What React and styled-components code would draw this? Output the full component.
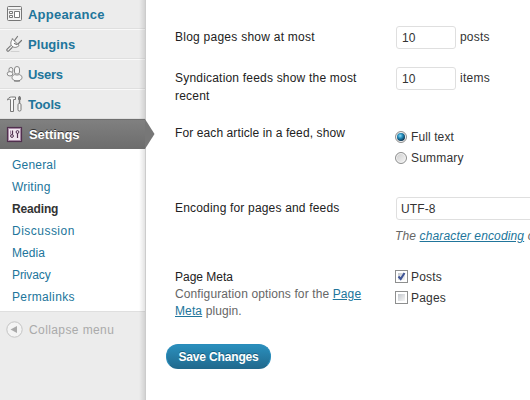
import React from 'react';
import styled, { createGlobalStyle, css } from 'styled-components';

const Global = createGlobalStyle`
  * { box-sizing: border-box; }
  html, body { margin: 0; background: #fff; overflow: hidden; }
  body { font: 12px/18px "Liberation Sans", Arial, sans-serif; color: #333; }
`;

const Page = styled.div`
  display: flex;
  width: 530px;
  height: 400px;
  overflow: hidden;
  white-space: nowrap;
`;

const Sidebar = styled.nav`
  position: relative;
  flex: none;
  width: 146px;
  height: 400px;
  background: #ececec;
  border-right: 1px solid #ccc;
  &::after {
    content: '';
    position: absolute;
    inset: 0 0 0 auto;
    width: 6px;
    background: linear-gradient(to right, rgba(0,0,0,0), rgba(0,0,0,0.11));
  }
`;

const MenuItem = styled.a`
  display: flex;
  align-items: center;
  height: ${p => p.$first ? 29 : 30}px;
  padding-left: 6px;
  gap: 5px;
  border-top: ${p => p.$first ? 0 : 1}px solid #f9f9f9;
  border-bottom: 1px solid #dfdfdf;
  color: #21759b;
  font-size: 13px;
  font-weight: bold;
  svg { flex: none; }
`;

const MenuLabel = styled.span`
  padding-top: 2px;
  letter-spacing: ${p => p.$ls || 0}px;
`;

const Current = styled(MenuItem)`
  position: relative;
  z-index: 2;
  border-top-color: #6f6f6f;
  border-bottom-color: #6d6d6d;
  background: linear-gradient(#808080, #6d6d6d);
  color: #fff;
  gap: 6px;
  text-shadow: 0 -1px 0 #333;
`;

const Arrow = styled.svg`
  position: absolute;
  left: 145px;
  top: -1px;
`;

const Submenu = styled.div`
  display: flex;
  flex-direction: column;
  height: 163px;
  padding: 5px 0 0 12px;
  background: #fff;
  border-bottom: 1px solid #dfdfdf;
`;

const SubItem = styled.a`
  height: 22px;
  line-height: 22px;
  color: ${p => p.$active ? '#333' : '#21759b'};
  font-weight: ${p => p.$active ? 'bold' : 'normal'};
  letter-spacing: ${p => p.$ls}px;
`;

const Collapse = styled.div`
  display: flex;
  align-items: center;
  height: 35px;
  padding-left: 6px;
  gap: 6px;
  color: #aaa;
  font-size: 12px;
  letter-spacing: 0.4px;
`;

const Content = styled.main`
  flex: 1;
  padding: 16px 0 0 20px;
`;

const Form = styled.div`
  display: flex;
  flex-direction: column;
  padding-left: 9px;
`;

const Row = styled.div`
  display: grid;
  grid-template-columns: 220px 1fr;
  height: ${p => p.$h}px;
`;

const Label = styled.div`
  padding-top: ${p => p.$top ?? 12}px;
  line-height: 18px;
  color: #222;
  letter-spacing: ${p => p.$ls ?? 0.18}px;
`;

const Hint = styled.div`
  color: #666;
  line-height: 17px;
  letter-spacing: 0.12px;
`;

const Link = styled.a`
  color: #21759b;
  text-decoration: underline;
`;

const Field = styled.div`
  display: flex;
  align-items: flex-start;
  padding: 10px 0 0 1px;
  gap: 4px;
`;

const fieldLook = css`
  height: 23px;
  padding: 0 5px;
  border: 1px solid #dfdfdf;
  border-radius: 3px;
  background: #fff;
  font: 12px "Liberation Sans", Arial, sans-serif;
  color: #333;
  outline: 0;
`;

const NumberInput = styled.input`
  ${fieldLook}
  width: 60px;
`;

const EncodingInput = styled.input`
  ${fieldLook}
  flex: none;
  width: 200px;
  margin-left: 1px;
  padding: 0 4px;
  letter-spacing: 0.1px;
`;

const Unit = styled.span`
  line-height: 23px;
  letter-spacing: ${p => p.$ls}px;
`;

const Stack = styled.div`
  display: flex;
  flex-direction: column;
  padding-top: ${p => p.$top}px;
`;

const Option = styled.label`
  display: flex;
  align-items: center;
  height: 21px;
  gap: ${p => p.$gap ?? 3}px;
  letter-spacing: ${p => p.$ls ?? 0.1}px;
`;

const Radio = styled.span`
  display: grid;
  place-items: center;
  width: 12px;
  height: 12px;
  border: 1px solid #8e8f8f;
  border-radius: 50%;
  background: linear-gradient(135deg, #ccc, #f6f6f6);
  box-shadow: inset 0 0 0 1px #f4f4f4;
  &::after {
    content: '';
    display: ${p => p.$on ? 'block' : 'none'};
    width: 8px;
    height: 8px;
    border-radius: 50%;
    background: radial-gradient(circle at 40% 35%, #8fdcf8 0, #2189b8 35%, #0d304b 75%);
  }
`;

const Check = styled.span`
  display: grid;
  width: 13px;
  height: 13px;
  padding: 2px;
  border: 1px solid #8e8f8f;
  background: linear-gradient(135deg, #c4c8ce, #f6f6f6) content-box;
  svg { margin: -1px; }
`;

const Description = styled.div`
  padding: 7px 0 0 0;
  line-height: 18px;
  font-style: italic;
  color: #666;
  letter-spacing: 0.14px;
`;

const SaveButton = styled.button`
  display: flex;
  align-items: center;
  justify-content: center;
  width: 105px;
  height: 25px;
  padding: 0;
  border: 1px solid #298cba;
  border-bottom-color: #21698c;
  border-radius: 12px;
  background: linear-gradient(#2a8fbd, #216a8e);
  color: #fff;
  font: bold 12px "Liberation Sans", Arial, sans-serif;
  letter-spacing: -0.15px;
  text-shadow: 0 -1px 0 rgba(0,0,0,0.3);
`;

const AppearanceIcon = () => (
  <svg width="17" height="18" viewBox="0 0 17 18" fill="none" stroke="#777">
    <rect x="1.5" y="1.5" width="14" height="14" rx="1" fill="#f3f3f3" />
    <path d="M2 4.5h13" stroke="#aaa" />
    <path d="M3.5 6.5h3v2h-3zM3.5 10.5h3v2h-3zM8.5 6.5h5v6h-5z" fill="#fff" />
  </svg>
);
const PluginsIcon = () => (
  <svg width="17" height="18" viewBox="0 0 17 18" fill="none" stroke="#777" strokeLinecap="round">
    <path d="M6.500 4L13 10.500c-2 2.200-5 2.500-7 .7S4.800 6 6.500 4z" fill="#fff" />
    <path d="M8.500 5.500L11.500 1.500M12 9L15.500 5.500M8.500 8.500l2 1" strokeWidth="1.200" />
    <path d="M5 12L2 15" strokeWidth="3.400" />
    <path d="M5.500 11.500L2 15" stroke="#eee" strokeWidth="1.200" />
    <path d="M5 16.500h8" stroke="#d0d0d0" />
  </svg>
);
const UsersIcon = () => (
  <svg width="17" height="18" viewBox="0 0 17 18" fill="#f7f7f7" stroke="#888">
    <rect x="3" y="2.500" width="3.800" height="5.500" rx="1.900" />
    <ellipse cx="4" cy="8.800" rx="2.800" ry="2.200" />
    <rect x="8.500" y="1.500" width="5" height="8" rx="2.500" />
    <ellipse cx="11" cy="12.500" rx="5" ry="3.500" />
    <path d="M8 9.500q3 1.500 6 0" fill="none" stroke="#aaa" />
    <path d="M8 16h6" stroke="#777" />
  </svg>
);
const ToolsIcon = () => (
  <svg width="17" height="18" viewBox="0 0 17 18" fill="#f7f7f7" stroke="#777">
    <path d="M1.500 5c.5-2 2-3 4-3h4v2.500H7.500v12h-3v-12C3.500 4 2.500 4 1.500 5z" />
    <path d="M13.500 1v7.500" strokeWidth="1.500" />
    <path d="M12.500 2.500h2v2h-2z" fill="#777" />
    <rect x="12" y="8.500" width="3" height="7.500" rx="1.200" />
  </svg>
);
const SettingsIcon = () => (
  <svg width="17" height="17" viewBox="0 0 17 17" fill="none" stroke="#50304e">
    <rect x="1.500" y="1.500" width="14" height="14" fill="#f1e6f0" strokeWidth="1.200" />
    <rect x="2.500" y="2.500" width="12" height="12" stroke="#a789a4" />
    <path d="M6.500 4.500v4M11.500 7v5" strokeWidth="1.200" />
    <circle cx="6" cy="10" r="1.400" />
    <circle cx="11.500" cy="6" r="1.400" />
    <path d="M4.500 4.500v4" stroke="#a789a4" />
  </svg>
);
const CollapseIcon = () => (
  <svg width="17" height="17" viewBox="0 0 17 17">
    <circle cx="8.500" cy="8.500" r="7.700" fill="#f4f4f4" stroke="#c4c4c4" />
    <path d="M4.500 8.500L11 5v7z" fill="#aaa" />
  </svg>
);

const menu = [
  ['Appearance', AppearanceIcon, 0.22],
  ['Plugins', PluginsIcon, 0.05],
  ['Users', UsersIcon, -0.3],
  ['Tools', ToolsIcon, -0.15],
];

const submenu = [
  ['General', 0.2], ['Writing', 0.2], ['Reading', -0.15], ['Discussion', 0.48],
  ['Media', 0.05], ['Privacy', -0.1], ['Permalinks', 0.35],
];

export default function App() {
  return (
    <>
      <Global />
      <Page>
        <Sidebar>
          {menu.map(([name, Icon, ls], i) => (
            <MenuItem key={name} $first={i === 0}>
              <Icon />
              <MenuLabel $ls={ls}>{name}</MenuLabel>
            </MenuItem>
          ))}
          <Current>
            <SettingsIcon />
            <MenuLabel $ls={-0.1}>Settings</MenuLabel>
            <Arrow width="10" height="30" viewBox="0 0 10 30">
              <path d="M0 0L9.500 15L0 30z" fill="#777" />
            </Arrow>
          </Current>
          <Submenu>
            {submenu.map(([name, ls]) => (
              <SubItem key={name} $ls={ls} $active={name === 'Reading'}>{name}</SubItem>
            ))}
          </Submenu>
          <Collapse><CollapseIcon />Collapse menu</Collapse>
        </Sidebar>
        <Content>
          <Form>
            <Row $h={41}>
              <Label $ls={0.25}>Blog pages show at most</Label>
              <Field><NumberInput defaultValue="10" /><Unit $ls={0.2}>posts</Unit></Field>
            </Row>
            <Row $h={59}>
              <Label $ls={0.2}>Syndication feeds show the most<br />recent</Label>
              <Field><NumberInput defaultValue="10" /><Unit $ls={0.3}>items</Unit></Field>
            </Row>
            <Row $h={71}>
              <Label $top={8} $ls={0.1}>For each article in a feed, show</Label>
              <Stack $top={10}>
                <Option $gap={4}><Radio $on />Full text</Option>
                <Option $gap={4} $ls={0.2}><Radio />Summary</Option>
              </Stack>
            </Row>
            <Row $h={69}>
              <Label>Encoding for pages and feeds</Label>
              <Stack $top={10}>
                <EncodingInput defaultValue="UTF-8" />
                <Description>The <Link>character encoding</Link> of</Description>
              </Stack>
            </Row>
            <Row $h={88}>
              <Label $ls={0}>
                Page Meta
                <Hint>Configuration options for the <Link>Page</Link><br /><Link>Meta</Link> plugin.</Hint>
              </Label>
              <Stack $top={10}>
                <Option $ls={0.2}><Check>
                  <svg width="9" height="9" viewBox="0 0 9 9" fill="none" stroke="#3f5597" strokeWidth="2">
                    <path d="M1.500 4.500L3.700 7L7.500 1" />
                  </svg>
                </Check>Posts</Option>
                <Option $ls={0.2}><Check />Pages</Option>
              </Stack>
            </Row>
          </Form>
          <SaveButton>Save Changes</SaveButton>
        </Content>
      </Page>
    </>
  );
}
